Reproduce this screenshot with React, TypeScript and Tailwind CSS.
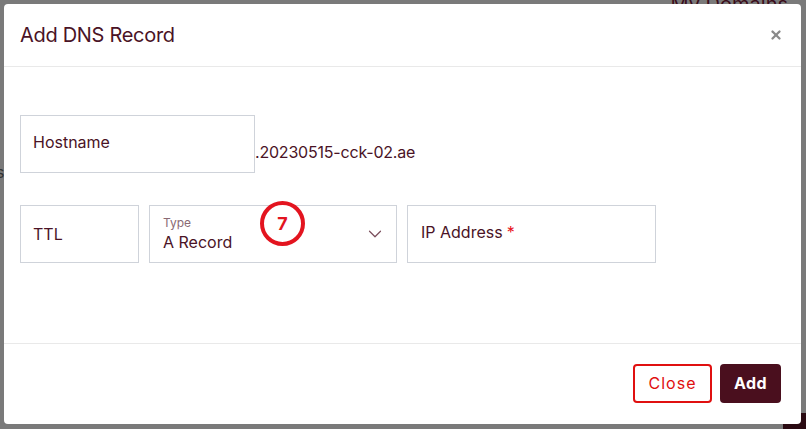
import { ChevronDown, X } from "lucide-react";

const font = { fontFamily: "Inter, 'Liberation Sans', sans-serif" };

export default function App() {
  return (
    <div
      className="relative h-[429px] w-[806px] overflow-hidden bg-[#7a7a7a] text-[#4a1326]"
      style={font}
    >
      {/* page behind the overlay */}
      <p className="absolute right-[18px] top-[-11px] text-[20px] text-[#3a0d1a]">My Domains</p>
      <p className="absolute left-[-4px] top-[160px] text-[16px] text-[#333]">s</p>
      <div className="absolute bottom-0 right-0 h-[16px] w-[23px] bg-[#2a0a12]" />

      <div className="absolute left-[4px] top-[4px] flex h-[420px] w-[797px] flex-col rounded-[4px] bg-white">
        <div className="flex h-[63px] items-center justify-between border-b border-[#e9e9e9] px-[16px]">
          <h1 className="text-[20px] font-normal tracking-[-0.3px]">Add DNS Record</h1>
          <X size={14} strokeWidth={4} className="mr-[2px] text-[#8a8a8a]" />
        </div>

        <div className="flex flex-1 flex-col gap-[32px] px-[16px] pt-[48px]">
          <div className="flex items-start">
            <div className="flex h-[58px] w-[235px] items-center border border-[#cfd3da] px-[12px] pb-[4px] text-[16px]">
              Hostname
            </div>
            <span className="mt-[25px] text-[16px] tracking-[-0.2px]">.20230515-cck-02.ae</span>
          </div>

          <div className="flex gap-[10px]">
            <div className="flex h-[58px] w-[119px] items-center border border-[#cfd3da] px-[12px] text-[16px]">
              TTL
            </div>
            <div className="relative flex h-[58px] w-[248px] items-center justify-between border border-[#cfd3da] pl-[13px] pr-[10px]">
              <div className="flex flex-col">
                <span className="text-[12px] leading-[14px] text-[#8a6a74]">Type</span>
                <span className="mt-[2px] text-[16px] leading-[20px]">A Record</span>
              </div>
              <ChevronDown size={22} strokeWidth={1.3} className="text-[#7a4d5b]" />
              <div className="absolute left-[110px] top-[-5px] flex h-[45px] w-[45px] items-center justify-center rounded-full border-[4px] border-[#e3141f] bg-white">
                <span className="text-[18px] font-bold text-[#e3141f]">7</span>
              </div>
            </div>
            <div className="flex h-[58px] w-[249px] items-center border border-[#cfd3da] px-[13px] pb-[4px] text-[16px]">
              IP Address<span className="ml-[4px] text-[#e8121c]">*</span>
            </div>
          </div>
        </div>

        <div className="flex h-[81px] items-center justify-end gap-[8px] border-t border-[#e9e9e9] pb-[2px] pr-[20px]">
          <button className="h-[39px] w-[79px] rounded-[4px] border-2 border-[#e01010] text-[16px] tracking-[1px] text-[#e01010]">
            Close
          </button>
          <button className="h-[39px] w-[61px] rounded-[4px] bg-[#4a0f1e] text-[16px] font-bold tracking-[0.5px] text-white">
            Add
          </button>
        </div>
      </div>
    </div>
  );
}
